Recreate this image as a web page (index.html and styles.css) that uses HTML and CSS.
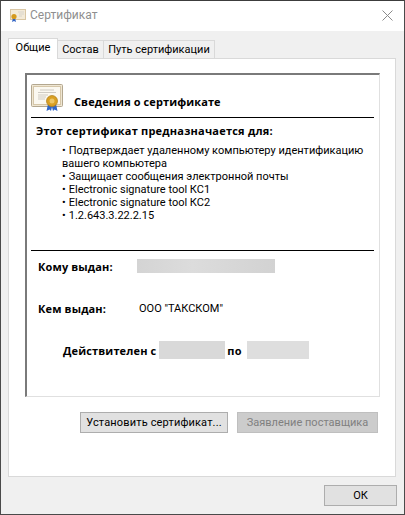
FILE: index.html
```html
<!DOCTYPE html>
<html lang="ru">
<head>
<meta charset="utf-8">
<title>Сертификат</title>
<link rel="stylesheet" href="styles.css">
</head>
<body>
<div class="window">
  <header class="titlebar">
    <svg class="title-icon" viewBox="0 0 16 14" width="16" height="14">
      <rect x="0.5" y="0.5" width="15" height="10" fill="#f3ead8" stroke="#d9c6a4"/>
      <path d="M8 3h6M9 5h5M9 7h3" stroke="#d8d4cc" stroke-width="1"/>
      <path d="M3 9l-1 4 2-1 2 1-1-4z" fill="#2f62c4"/>
      <circle cx="4" cy="7.500" r="2.600" fill="#d59a1e"/>
    </svg>
    <span class="title-text">Сертификат</span>
    <svg class="close" viewBox="0 0 11 11" width="11" height="11"><path d="M0.5 0.5l10 10M10.5 0.5l-10 10" stroke="#8a8a8a" stroke-width="1" fill="none"/></svg>
  </header>
  <div class="content">
    <nav class="tabs">
      <span class="tab active">Общие</span>
      <span class="tab tab-2">Состав</span>
      <span class="tab tab-3">Путь сертификации</span>
    </nav>
    <section class="panel">
      <div class="info">
        <div class="info-head">
          <svg class="cert-icon" viewBox="0 0 32 28" width="32" height="28">
            <rect x="0.5" y="0.5" width="31" height="22" rx="1" fill="#efe6d3" stroke="#b3a78f"/>
            <rect x="2.5" y="2.5" width="27" height="18" fill="#fbf8f0" stroke="#d5c6a8"/>
            <path d="M9 6h14M7 8.500h18M7 11h10M7 13h8M7 15h7" stroke="#cfcbc3" stroke-width="1"/>
            <path d="M17 20l-1.500 7 3-1.500 1.500 1.500 1-4 1 4 1.500-1.500 3 1.500-1.500-7z" fill="#2f66c8"/>
            <circle cx="21" cy="17" r="5.500" fill="#d9a024" stroke="#b07c12" stroke-width="0.700"/>
            <circle cx="21" cy="17" r="2.500" fill="#eec766"/>
          </svg>
          <h1 class="info-title">Сведения о сертификате</h1>
        </div>
        <div class="purpose">
          <h2 class="purpose-title">Этот сертификат предназначается для:</h2>
          <ul class="purpose-list">
            <li>Подтверждает удаленному компьютеру идентификацию вашего компьютера</li>
            <li>Защищает сообщения электронной почты</li>
            <li>Electronic signature tool КС1</li>
            <li>Electronic signature tool КС2</li>
            <li>1.2.643.3.22.2.15</li>
          </ul>
        </div>
        <div class="details">
          <div class="row row-to">
            <span class="label">Кому выдан:</span>
            <span class="redact redact-to"></span>
          </div>
          <div class="row row-by">
            <span class="label">Кем выдан:</span>
            <span class="value">ООО "ТАКСКОМ"</span>
          </div>
          <div class="row row-valid">
            <span class="label">Действителен с</span>
            <span class="redact redact-from"></span>
            <span class="label">по</span>
            <span class="redact redact-until"></span>
          </div>
        </div>
      </div>
      <div class="panel-buttons">
        <button class="btn btn-install" type="button">Установить сертификат...</button>
        <button class="btn btn-disabled" type="button" disabled>Заявление поставщика</button>
      </div>
    </section>
    <footer class="footer">
      <button class="btn btn-ok" type="button">ОК</button>
    </footer>
  </div>
</div>
</body>
</html>
```
FILE: styles.css
```css
* { box-sizing: border-box; }
html, body { margin: 0; padding: 0; }
body { width: 405px; height: 515px; overflow: hidden; background: #f0f0f0; font-family: Roboto, "Open Sans", sans-serif; font-size: 11px; color: #000; }
.window { width: 405px; height: 515px; display: flex; flex-direction: column; border: 1px solid #4a4a4a; border-top-color: #3c3c3c; }
.titlebar { height: 30px; flex: none; background: #fff; display: flex; align-items: center; padding: 0 11px 0 9px; }
.title-icon { flex: none; }
.title-text { margin-left: 4px; font-size: 12px; color: #8f8f8f; flex: 1; margin-top: -2px; }
.close { flex: none; margin-top: -2px; }
.content { flex: 1; display: flex; flex-direction: column; padding: 7px 7px 0 7px; min-height: 0; }
.tabs { height: 20px; flex: none; display: flex; align-items: flex-end; position: relative; z-index: 1; }
.tab { height: 18px; display: flex; align-items: center; justify-content: center; background: #f0f0f0; border: 1px solid #d9d9d9; border-bottom: 0; border-left: 0; font-size: 11px; }
.tab.active { height: 21px; width: 50px; margin-bottom: -1px; background: #fff; border-left: 1px solid #d9d9d9; padding-bottom: 3px; }
.tab-2 { width: 46px; }
.tab-3 { width: 111px; }
.panel { height: 419px; flex: none; margin-right: 1px; background: #fff; border: 1px solid #d9d9d9; padding: 14px 15px 0 16px; display: flex; flex-direction: column; }
.info { height: 324px; flex: none; border: 1px solid #e0e0e0; border-top: 2px solid #7a7a7a; border-left: 2px solid #7a7a7a; padding: 0 5px 0 4px; display: flex; flex-direction: column; }
.info-head { height: 43px; flex: none; display: flex; align-items: flex-start; border-bottom: 1px solid #000; padding-top: 9px; }
.cert-icon { flex: none; }
.info-title { margin: 10px 0 0 11px; font-family: "Open Sans", sans-serif; font-size: 11px; line-height: 15px; font-weight: 700; letter-spacing: 0.1px; }
.purpose { height: 133px; flex: none; border-bottom: 1px solid #000; padding: 5px 0 0 5px; }
.purpose-title { margin: 0; font-family: "Open Sans", sans-serif; font-size: 11px; line-height: 15px; font-weight: 700; letter-spacing: 0.22px; }
.purpose-list { margin: 6px 0 0 26px; padding: 0; list-style: none; font-size: 11px; line-height: 13px; width: 312px; }
.purpose-list li::before { content: "•"; margin-right: 3px; }
.details { flex: 1; position: relative; }
.row { display: flex; align-items: center; font-size: 11px; }
.label { font-family: "Open Sans", sans-serif; font-size: 11px; font-weight: 700; letter-spacing: 0.14px; }
.row-to { margin: 8px 0 0 7px; height: 14px; }
.row-to .label { width: 99px; }
.row-by { margin: 28px 0 0 7px; height: 14px; }
.row-by .label { width: 101px; }
.row-valid { margin: 26px 0 0 32px; height: 18px; }
.redact { display: block; background: #d9d9d9; }
.redact-to { width: 138px; height: 14px; background: linear-gradient(90deg, #d4d4d4, #dcdcdc 40%, #d2d2d2); }
.redact-from { width: 66px; height: 18px; margin: 0 2px 0 3px; }
.redact-until { width: 62px; height: 18px; margin-left: 5px; background: #dedede; }
.panel-buttons { display: flex; gap: 9px; margin: 15px 0 0 55px; }
.btn { height: 21px; padding: 0; font: inherit; font-size: 11px; color: #000; background: #e1e1e1; border: 1px solid #adadad; border-radius: 0; }
.btn-install { width: 148px; letter-spacing: 0.15px; }
.btn-disabled { width: 141px; background: #cccccc; border-color: #bfbfbf; color: #808080; }
.footer { display: flex; justify-content: flex-end; padding: 8px 0 0 0; }
.btn-ok { width: 73px; }
```
